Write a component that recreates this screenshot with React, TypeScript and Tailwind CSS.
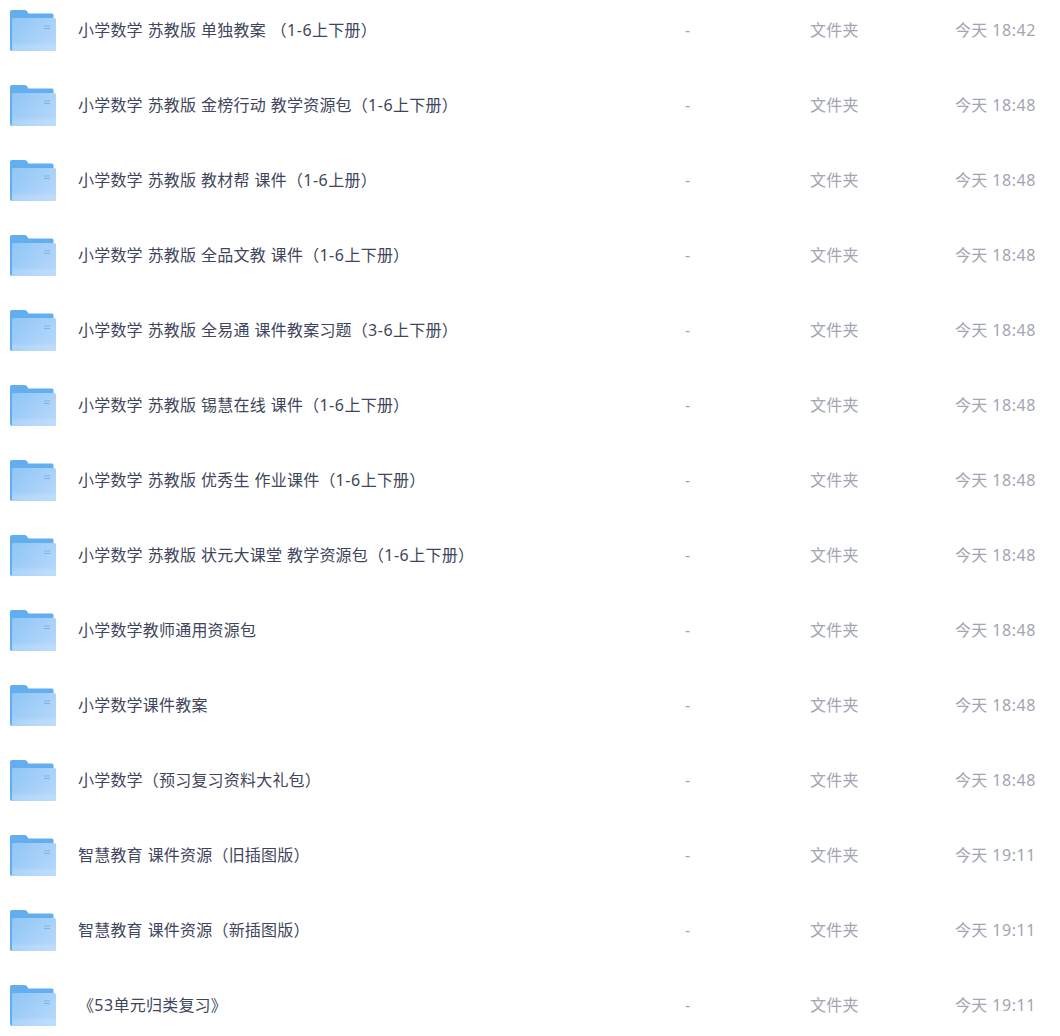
const rows: [string, string][] = [
  ["小学数学 苏教版 单独教案 （1-6上下册）", "今天 18:42"],
  ["小学数学 苏教版 金榜行动 教学资源包（1-6上下册）", "今天 18:48"],
  ["小学数学 苏教版 教材帮 课件（1-6上册）", "今天 18:48"],
  ["小学数学 苏教版 全品文教 课件（1-6上下册）", "今天 18:48"],
  ["小学数学 苏教版 全易通 课件教案习题（3-6上下册）", "今天 18:48"],
  ["小学数学 苏教版 锡慧在线 课件（1-6上下册）", "今天 18:48"],
  ["小学数学 苏教版 优秀生 作业课件（1-6上下册）", "今天 18:48"],
  ["小学数学 苏教版 状元大课堂 教学资源包（1-6上下册）", "今天 18:48"],
  ["小学数学教师通用资源包", "今天 18:48"],
  ["小学数学课件教案", "今天 18:48"],
  ["小学数学（预习复习资料大礼包）", "今天 18:48"],
  ["智慧教育 课件资源（旧插图版）", "今天 19:11"],
  ["智慧教育 课件资源（新插图版）", "今天 19:11"],
  ["《53单元归类复习》", "今天 19:11"],
];

function Label({ text }: { text: string }) {
  return (
    <>
      {text.split(/([0-9:-]+)/).map((part, i) =>
        i % 2 === 1 ? (
          <span key={i} className="tracking-[0.55px]">{part}</span>
        ) : (
          <span key={i}>{part}</span>
        ),
      )}
    </>
  );
}

function Folder({ id }: { id: number }) {
  return (
    <svg width="46" height="41" viewBox="0 0 46 41" className="shrink-0 mt-[1px]">
      <defs>
        <linearGradient id={`f${id}`} x1="0" y1="0" x2="1" y2="0.6">
          <stop offset="0" stopColor="#8fc6f6" />
          <stop offset="1" stopColor="#b3d6fa" />
        </linearGradient>
        <linearGradient id={`b${id}`} x1="0" y1="0" x2="0" y2="1">
          <stop offset="0" stopColor="#ffffff" stopOpacity="0" />
          <stop offset="0.5" stopColor="#ffffff" stopOpacity="0.16" />
          <stop offset="1" stopColor="#ffffff" stopOpacity="0.1" />
        </linearGradient>
      </defs>
      <path d="M0 2a2 2 0 0 1 2-2h12.500a3 3 0 0 1 2.300 1.100L18.500 3.500H42a1.500 1.500 0 0 1 1.500 1.500V10H3v31H2a2 2 0 0 1-2-2z" fill="#62aeef" />
      <path d="M2 41V9.500A1.500 1.500 0 0 1 3.500 8H44.500A1.500 1.500 0 0 1 46 9.500V39.500A1.500 1.500 0 0 1 44.500 41z" fill={`url(#f${id})`} />
      <rect x="2" y="32" width="44" height="9" fill={`url(#b${id})`} />
      <rect x="34" y="15.500" width="6" height="1" fill="#7fb3e3" />
      <rect x="34" y="18" width="6" height="1" fill="#7fb3e3" />
    </svg>
  );
}

export default function App() {
  return (
    <div className="-mt-[8px] w-[1060px] h-[1036px] overflow-hidden bg-white font-['Noto_Sans','Noto_Sans_CJK_SC',sans-serif] text-[16px] tracking-[0.2px] [word-spacing:0.5px]">
      {rows.map(([name, time], i) => (
        <div key={i} className="flex items-center h-[75px] pl-[10px]">
          <Folder id={i} />
          <span className="ml-[22px] w-[607px] shrink-0 whitespace-pre text-[#3f465c]"><Label text={name} /></span>
          <span className="w-[125px] shrink-0 text-[#a2a5b2]">-</span>
          <span className="w-[145px] shrink-0 text-[#a2a5b2]">文件夹</span>
          <span className="text-[#a2a5b2]"><Label text={time} /></span>
        </div>
      ))}
    </div>
  );
}
